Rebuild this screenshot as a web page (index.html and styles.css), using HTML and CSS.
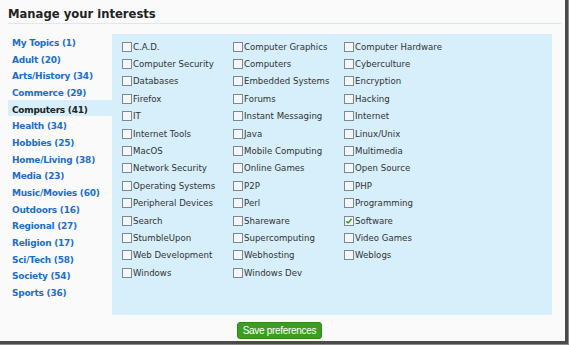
FILE: index.html
```html
<!DOCTYPE html>
<html>
<head>
<meta charset="UTF-8">
<title>Manage your interests</title>
<link rel="stylesheet" href="styles.css">
</head>
<body>
<div class="frame">
<h1>Manage your interests</h1>
<div class="main">
<ul class="topics">
  <li><a href="#">My Topics (1)</a></li>
  <li><a href="#">Adult (20)</a></li>
  <li><a href="#">Arts/History (34)</a></li>
  <li><a href="#">Commerce (29)</a></li>
  <li class="current"><a href="#">Computers (41)</a></li>
  <li><a href="#">Health (34)</a></li>
  <li><a href="#">Hobbies (25)</a></li>
  <li><a href="#">Home/Living (38)</a></li>
  <li><a href="#">Media (23)</a></li>
  <li><a href="#">Music/Movies (60)</a></li>
  <li><a href="#">Outdoors (16)</a></li>
  <li><a href="#">Regional (27)</a></li>
  <li><a href="#">Religion (17)</a></li>
  <li><a href="#">Sci/Tech (58)</a></li>
  <li><a href="#">Society (54)</a></li>
  <li><a href="#">Sports (36)</a></li>
</ul>
<div class="panel">
<ul class="col">
  <li><span class="box"></span>C.A.D.</li>
  <li><span class="box"></span>Computer Security</li>
  <li><span class="box"></span>Databases</li>
  <li><span class="box"></span>Firefox</li>
  <li><span class="box"></span>IT</li>
  <li><span class="box"></span>Internet Tools</li>
  <li><span class="box"></span>MacOS</li>
  <li><span class="box"></span>Network Security</li>
  <li><span class="box"></span>Operating Systems</li>
  <li><span class="box"></span>Peripheral Devices</li>
  <li><span class="box"></span>Search</li>
  <li><span class="box"></span>StumbleUpon</li>
  <li><span class="box"></span>Web Development</li>
  <li><span class="box"></span>Windows</li>
</ul>
<ul class="col">
  <li><span class="box"></span>Computer Graphics</li>
  <li><span class="box"></span>Computers</li>
  <li><span class="box"></span>Embedded Systems</li>
  <li><span class="box"></span>Forums</li>
  <li><span class="box"></span>Instant Messaging</li>
  <li><span class="box"></span>Java</li>
  <li><span class="box"></span>Mobile Computing</li>
  <li><span class="box"></span>Online Games</li>
  <li><span class="box"></span>P2P</li>
  <li><span class="box"></span>Perl</li>
  <li><span class="box"></span>Shareware</li>
  <li><span class="box"></span>Supercomputing</li>
  <li><span class="box"></span>Webhosting</li>
  <li><span class="box"></span>Windows Dev</li>
</ul>
<ul class="col">
  <li><span class="box"></span>Computer Hardware</li>
  <li><span class="box"></span>Cyberculture</li>
  <li><span class="box"></span>Encryption</li>
  <li><span class="box"></span>Hacking</li>
  <li><span class="box"></span>Internet</li>
  <li><span class="box"></span>Linux/Unix</li>
  <li><span class="box"></span>Multimedia</li>
  <li><span class="box"></span>Open Source</li>
  <li><span class="box"></span>PHP</li>
  <li><span class="box"></span>Programming</li>
  <li><span class="box checked"><svg width="8" height="8" viewBox="0 0 8 8"><path d="M1.5 4.2 L3.2 6 L6.6 1.8" fill="none" stroke="#2a9a1a" stroke-width="1.4"/></svg></span>Software</li>
  <li><span class="box"></span>Video Games</li>
  <li><span class="box"></span>Weblogs</li>
</ul>
</div>
</div>
<div class="actions"><button class="save">Save preferences</button></div>
</div>
</body>
</html>
```

FILE: styles.css
```css
html, body {margin:0; padding:0; background:#8a8a8a;}
body {font-family:"DejaVu Sans", Verdana, sans-serif; color:#333;}
.frame {width:568px; height:344px; background:#fafafa; border-right:3px solid #4a4a4a; border-bottom:3px solid #4a4a4a; box-sizing:border-box; padding:0 0 0 8px;}
h1 {margin:0 4px 0 0; padding:7px 0 2px 0; font-size:11.6px; font-weight:bold; color:#222; border-bottom:1px solid #dde8e8;}
.main {display:flex; margin-top:10px;}
.topics {list-style:none; margin:-1px 0 0 0; padding:0; width:104px;}
.topics li {height:16.67px; line-height:16.67px; padding-left:4px;}
.topics a {font-size:9px; font-weight:bold; letter-spacing:-0.25px; color:#1c6fc8; text-decoration:none;}
.topics li.current {background:#d6effa;}
.topics li.current a {color:#222;}
.panel {display:flex; width:440px; height:281px; background:#d6effa; padding:4px 0 0 10px; box-sizing:border-box;}
.col {list-style:none; margin:0; padding:0; width:111px;}
.col li {height:17.4px; display:flex; align-items:center; font-size:8.6px; white-space:nowrap;}
.box {width:8px; height:8px; border:1px solid #7b8896; background:#f4f6f8; margin-right:1px; display:inline-flex; align-items:center; justify-content:center; flex:none;}
.actions {display:flex; padding:7px 0 0 229px;}
.save {font-family:"Liberation Sans", Arial, sans-serif; font-size:10px; letter-spacing:-0.3px; color:#fff; background:#3c9e1f; border:1px solid #2f8a16; border-radius:3px; height:17px; width:85px; padding:0;}
```
